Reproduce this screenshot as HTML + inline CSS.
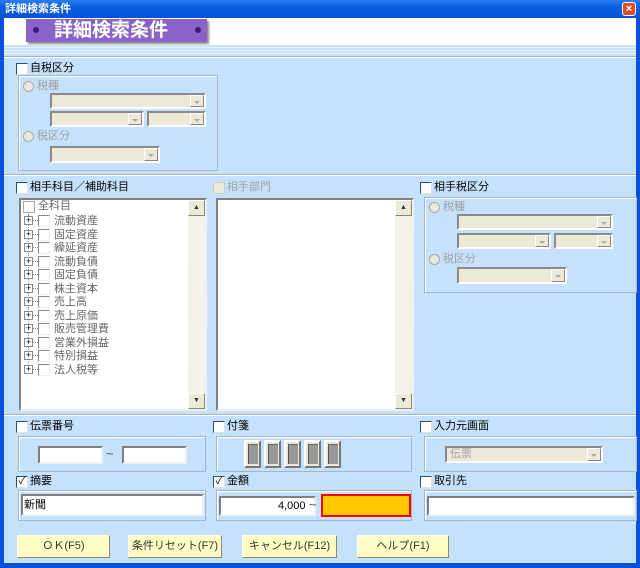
<!DOCTYPE html><html><head><meta charset="utf-8"><style>
*{box-sizing:border-box;margin:0;padding:0}
body{width:640px;height:568px;overflow:hidden;background:#0a52d8;font-family:"Liberation Sans","Noto Sans CJK JP",sans-serif;font-size:11px;color:#000;position:relative}
.a{position:absolute}
.cl{position:absolute;left:4px;top:18px;width:632px;height:545px;background:#c6e1fb}
.grp{position:absolute;border:1px solid #a6b4c2;box-shadow:inset 1px 1px 0 #fff}
.cb{position:absolute;width:12px;height:12px;background:#fff;border:1px solid #1c5180;border-right-color:#e0e0e0;border-bottom-color:#e0e0e0}
.lbl{position:absolute;font-size:11px;line-height:13px;white-space:nowrap}
.dis{color:#a0a0a0}
.combo{position:absolute;background:#ece9d8;border:2px solid;border-color:#8a8a8a #fff #fff #8a8a8a}
.combo i{position:absolute;right:0;top:0;width:14px;height:100%;background:#ece9d8;border:1px solid;border-color:#fff #888 #888 #fff}
.combo i:after{content:"";position:absolute;left:3px;top:5px;border:3px solid transparent;border-top:3px solid #aaa}
.inp{position:absolute;background:#fff;border:2px solid;border-color:#808080 #f0f0f0 #f0f0f0 #808080}
.rad{position:absolute;width:11px;height:11px;border-radius:50%;background:#ece9d8;border:1px solid #aaa}
.btn{position:absolute;height:23px;background:#ffffc4;border:1px solid;border-color:#fff #8a8a6a #8a8a6a #fff;text-align:center;line-height:21px;font-size:11px;color:#333}
.hl{position:absolute;left:4px;width:632px;height:2px;border-top:1px solid #a6b4c2;border-bottom:1px solid #fff}
</style></head><body>
<div class="a" style="left:0;top:0;width:640px;height:18px;background:linear-gradient(#2a7cf0,#0a5ee0 40%,#0552d5)"></div>
<div class="lbl" style="left:5px;top:3px;color:#fff;font-weight:bold">詳細検索条件</div>
<div class="a" style="left:622px;top:2px;width:14px;height:14px;background:#d8502a;border:1px solid #fff;border-radius:3px;color:#fff;font-size:11px;line-height:12px;text-align:center;font-weight:bold">×</div>
<div class="cl"></div>
<div class="a" style="left:4px;top:18px;width:632px;height:27px;background:#fff"></div>
<div class="a" style="left:26px;top:19px;width:181px;height:23px;background:#8a62c8;box-shadow:2px 2px 2px #888"></div>
<div class="a" style="left:33px;top:27px;width:6px;height:6px;border-radius:50%;background:#3a1a80"></div>
<div class="a" style="left:195px;top:27px;width:6px;height:6px;border-radius:50%;background:#3a1a80"></div>
<div class="lbl" style="left:54px;top:19px;font-size:19px;line-height:23px;color:#fff;font-weight:bold">詳細検索条件</div>
<div class="a" style="left:4px;top:45px;width:632px;height:12px;background:repeating-linear-gradient(#c6e1fb 0 2px,#e8f3fd 2px 3px)"></div>
<div class="hl" style="top:56px"></div>
<div class="cb" style="left:16px;top:63px"></div><div class="lbl" style="left:30px;top:62px">自税区分</div>
<div class="grp" style="left:18px;top:75px;width:200px;height:96px"></div>
<div class="rad" style="left:23px;top:81px"></div><div class="lbl dis" style="left:37px;top:80px">税種</div>
<div class="combo" style="left:50px;top:93px;width:156px;height:16px"><i></i></div>
<div class="combo" style="left:50px;top:111px;width:94px;height:16px"><i></i></div>
<div class="combo" style="left:147px;top:111px;width:59px;height:16px"><i></i></div>
<div class="rad" style="left:23px;top:131px"></div><div class="lbl dis" style="left:37px;top:130px">税区分</div>
<div class="combo" style="left:50px;top:146px;width:110px;height:17px"><i></i></div>
<div class="hl" style="top:174px"></div>
<div class="cb" style="left:16px;top:182px"></div><div class="lbl" style="left:30px;top:181px">相手科目／補助科目</div>
<div class="cb" style="left:213px;top:182px;border-color:#ccc;background:#ece9d8"></div><div class="lbl dis" style="left:227px;top:181px">相手部門</div>
<div class="cb" style="left:420px;top:182px"></div><div class="lbl" style="left:434px;top:181px">相手税区分</div>
<div class="inp" style="left:19px;top:198px;width:188px;height:213px"></div>
<div class="a" style="left:188px;top:200px;width:17px;height:209px;background:repeating-linear-gradient(45deg,#eeece2 0 1px,#f8f7f0 1px 2px)"></div>
<div class="btn" style="left:188px;top:200px;width:17px;height:16px;background:#ece9d8;font-size:7px;line-height:14px">▲</div>
<div class="btn" style="left:188px;top:393px;width:17px;height:16px;background:#ece9d8;font-size:7px;line-height:14px">▼</div>
<div class="cb" style="left:23px;top:201px;border-color:#aaa"></div><div class="lbl dis" style="left:38px;top:200px;color:#666">全科目</div>
<div class="a" style="left:28px;top:214px;width:1px;height:156px;border-left:1px dotted #888"></div>
<div id="tr"></div>
<div class="inp" style="left:216px;top:198px;width:198px;height:213px"></div>
<div class="a" style="left:395px;top:200px;width:17px;height:209px;background:repeating-linear-gradient(45deg,#eeece2 0 1px,#f8f7f0 1px 2px)"></div>
<div class="btn" style="left:395px;top:200px;width:17px;height:16px;background:#ece9d8;font-size:7px;line-height:14px">▲</div>
<div class="btn" style="left:395px;top:393px;width:17px;height:16px;background:#ece9d8;font-size:7px;line-height:14px">▼</div>
<div class="grp" style="left:424px;top:197px;width:213px;height:96px"></div>
<div class="rad" style="left:429px;top:202px"></div><div class="lbl dis" style="left:443px;top:201px">税種</div>
<div class="combo" style="left:457px;top:214px;width:156px;height:16px"><i></i></div>
<div class="combo" style="left:457px;top:233px;width:94px;height:16px"><i></i></div>
<div class="combo" style="left:554px;top:233px;width:59px;height:16px"><i></i></div>
<div class="rad" style="left:429px;top:254px"></div><div class="lbl dis" style="left:443px;top:253px">税区分</div>
<div class="combo" style="left:457px;top:267px;width:110px;height:17px"><i></i></div>
<div class="hl" style="top:414px"></div>
<div class="cb" style="left:16px;top:421px"></div><div class="lbl" style="left:30px;top:420px">伝票番号</div>
<div class="cb" style="left:213px;top:421px"></div><div class="lbl" style="left:227px;top:420px">付箋</div>
<div class="cb" style="left:420px;top:421px"></div><div class="lbl" style="left:434px;top:420px">入力元画面</div>
<div class="grp" style="left:18px;top:436px;width:188px;height:36px"></div>
<div class="inp" style="left:38px;top:446px;width:65px;height:18px"></div>
<div class="lbl" style="left:106px;top:447px;color:#555;font-size:13px">~</div>
<div class="inp" style="left:122px;top:446px;width:65px;height:18px"></div>
<div class="grp" style="left:216px;top:436px;width:196px;height:36px"></div>
<div class="grp" style="left:424px;top:436px;width:213px;height:36px"></div>
<div class="combo" style="left:445px;top:446px;width:158px;height:17px"><i></i></div>
<div class="lbl dis" style="left:450px;top:448px">伝票</div>
<div class="cb" style="left:16px;top:476px;font-size:10px;line-height:10px;text-align:center">✓</div><div class="lbl" style="left:30px;top:475px">摘要</div>
<div class="cb" style="left:213px;top:476px;font-size:10px;line-height:10px;text-align:center">✓</div><div class="lbl" style="left:227px;top:475px">金額</div>
<div class="cb" style="left:420px;top:476px"></div><div class="lbl" style="left:434px;top:475px">取引先</div>
<div class="grp" style="left:18px;top:490px;width:188px;height:31px"></div>
<div class="inp" style="left:21px;top:494px;width:183px;height:22px"></div>
<div class="lbl" style="left:24px;top:499px">新聞</div>
<div class="grp" style="left:216px;top:490px;width:196px;height:31px"></div>
<div class="inp" style="left:219px;top:496px;width:97px;height:20px"></div>
<div class="lbl" style="left:278px;top:500px">4,000</div>
<div class="lbl" style="left:309px;top:498px;color:#555;font-size:13px">~</div>
<div class="a" style="left:321px;top:494px;width:90px;height:23px;border:2px solid #f00;background:#ffc800"></div>
<div class="grp" style="left:424px;top:490px;width:213px;height:31px"></div>
<div class="inp" style="left:427px;top:496px;width:208px;height:20px"></div>
<div class="btn" style="left:17px;top:535px;width:93px">ＯＫ(F5)</div>
<div class="btn" style="left:128px;top:535px;width:94px">条件リセット(F7)</div>
<div class="btn" style="left:242px;top:535px;width:95px">キャンセル(F12)</div>
<div class="btn" style="left:357px;top:535px;width:92px">ヘルプ(F1)</div>
<script>
var t=["流動資産","固定資産","繰延資産","流動負債","固定負債","株主資本","売上高","売上原価","販売管理費","営業外損益","特別損益","法人税等"],h="";
t.forEach(function(s,i){var y=215+i*13.5;
h+='<div class="a" style="left:24px;top:'+(y+1)+'px;width:9px;height:9px;border:1px solid #888;background:#fff;font-size:9px;line-height:7px;text-align:center">+</div>';
h+='<div class="a" style="left:33px;top:'+(y+5)+'px;width:5px;border-top:1px dotted #888"></div>';
h+='<div class="cb" style="left:38px;top:'+y+'px;border-color:#888 #eee #eee #888"></div>';
h+='<div class="lbl" style="left:54px;top:'+y+'px;color:#666">'+s+'</div>';});
var b="";for(var k=0;k<5;k++)b+='<div class="a" style="left:'+(244+k*20)+'px;top:440px;width:17px;height:28px;background:#ece9d8;border:2px solid;border-color:#fff #777 #777 #fff"><div style="margin:2px 2px;width:10px;height:20px;background:#999;border-left:1px solid #555;border-top:1px solid #666"></div></div>';
document.getElementById("tr").outerHTML=h+b;
</script>
</body></html>
